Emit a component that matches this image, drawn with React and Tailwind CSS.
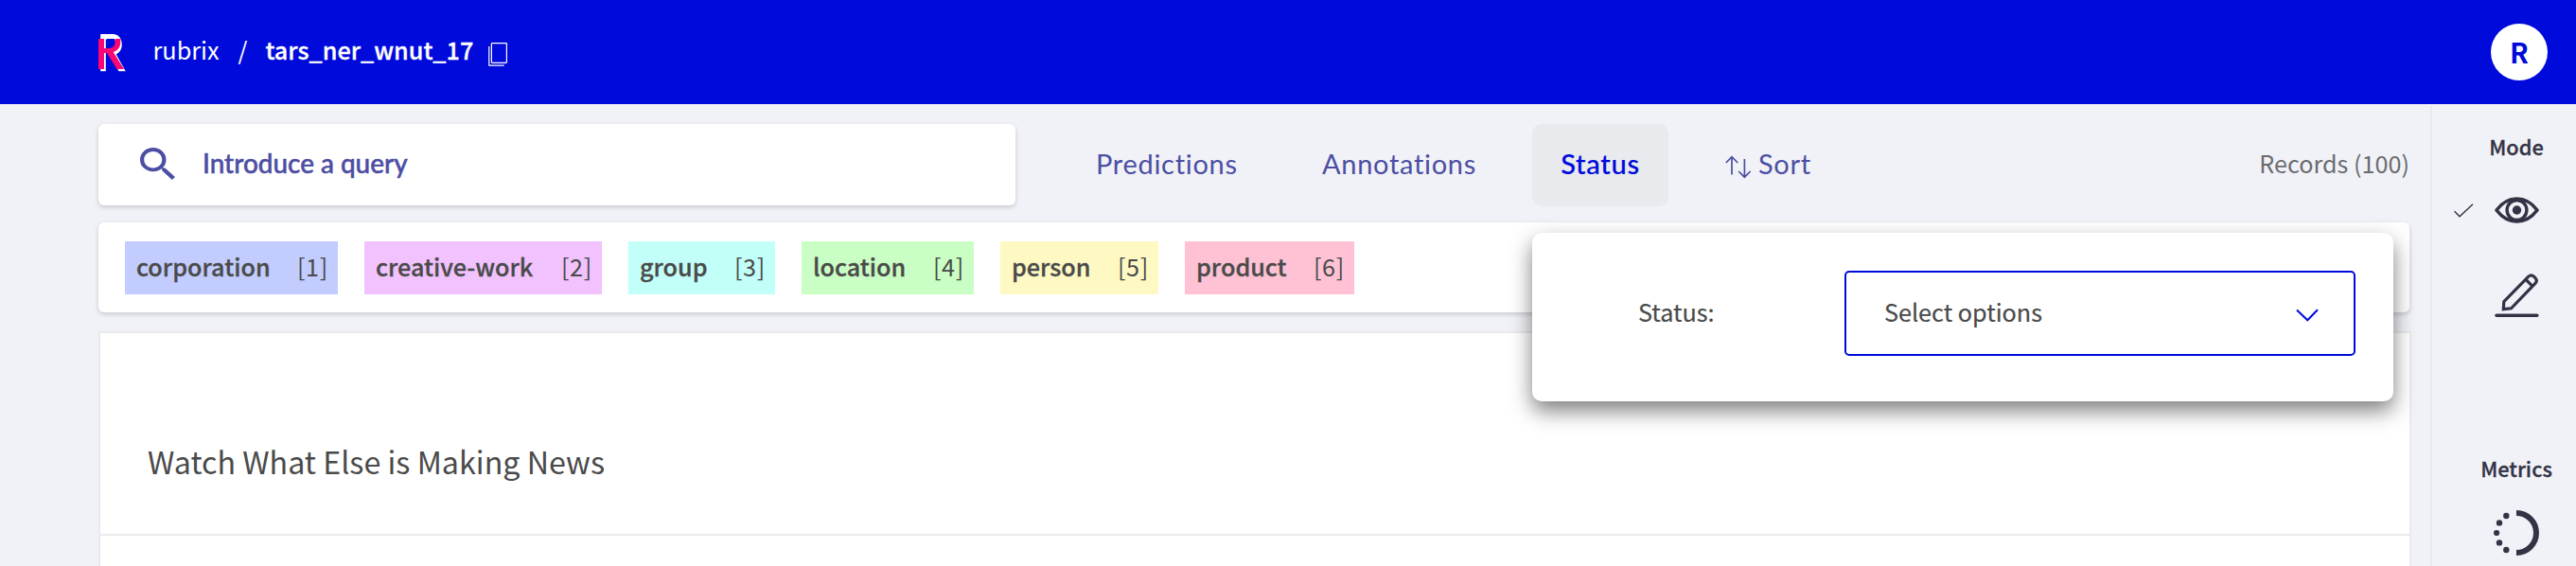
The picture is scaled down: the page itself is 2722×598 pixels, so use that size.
import React from "react";

const LABELS = [
  { name: "corporation", key: 1, box: "w-[225px] bg-[#c3ccfe]" },
  { name: "creative-work", key: 2, box: "w-[251px] bg-[#f2c2fe]" },
  { name: "group", key: 3, box: "w-[155px] bg-[#c2fff8]" },
  { name: "location", key: 4, box: "w-[182px] bg-[#c9fec4]" },
  { name: "person", key: 5, box: "w-[167px] bg-[#fef9c3]" },
  { name: "product", key: 6, box: "w-[179px] bg-[#fec2d4]" },
];

function Logo() {
  return (
    <svg className="mt-0.5 h-10 w-[29px] shrink-0" viewBox="0 0 29 40" fill="none">
      <path d="M5 39.3V2.7H14.5C20 2.7 22 6.5 22 11C22 16 19 19.5 13.5 19.5" stroke="#fff" strokeWidth="5.6" />
      <path d="M12.5 21H18.5L28.7 39.3H21.5Z" fill="#fff" />
      <path d="M9 5H17V9C17 12.5 15 14.5 11 14.8H9Z" fill="#000adb" />
      <path d="M0 5H6V15H10.5C15 15 17.5 12.5 17.5 9V5H23.3V8.5C23.3 14 20.5 17.5 15.7 19L27 37H19.5L9 20H6V37H0Z" fill="#fa0573" />
    </svg>
  );
}

function CopyIcon() {
  return (
    <svg className="h-[25px] w-5 shrink-0" viewBox="0 0 20 25" fill="none" stroke="#fff" strokeWidth="1.2">
      <rect x="3.4" y="0.7" width="16" height="20.6" rx="0.5" />
      <path d="M0.8 4V24.2H16.8" />
    </svg>
  );
}

function SortIcon() {
  return (
    <svg className="h-[25px] w-7 shrink-0" viewBox="0 0 28 25" fill="none" stroke="currentColor" strokeWidth="1.7">
      <path d="M7 20.5V1.6M0.8 8L7 1.6L13.2 8" />
      <path d="M20.4 4V23.2M14.2 17L20.4 23.2L26.6 17" />
    </svg>
  );
}

function Header() {
  return (
    <header className="flex h-[110px] items-center bg-[#000adb] pr-[30px] pl-[104px] text-[25.3px] text-white">
      <Logo />
      <div className="flex items-center pb-[6px] leading-10">
        <span className="ml-[28.5px] w-[90px]">rubrix</span>
        <span className="w-[29px]">/</span>
        <span className="w-[235px] text-[25.2px] font-medium [-webkit-text-stroke:0.3px_currentColor]">tars_ner_wnut_17</span>
      </div>
      <div className="pt-[5px]">
        <CopyIcon />
      </div>
      <div className="ml-auto flex size-[60px] items-center justify-center rounded-full bg-white pb-[3px] text-[29px] leading-10 font-bold text-[#000adb]">
        R
      </div>
    </header>
  );
}

function StatusMenu() {
  return (
    <div className="absolute top-[115px] left-0 z-10 flex h-[178px] w-[910px] rounded-[10px] bg-white pt-10 pl-28 font-['Noto_Sans_CJK_SC',sans-serif] text-[25.2px] font-normal tracking-normal text-[#4a4a4a] shadow-[0_10px_22px_0_rgba(0,0,0,0.5)]">
      <span className="w-[218px] pt-[23px] leading-10">Status:</span>
      <div className="flex h-[90px] w-[540px] items-center justify-between rounded-[5px] border-2 border-[#000adb] pr-[37px] pl-10">
        <span className="pb-[3px] leading-10">Select options</span>
        <svg className="mt-1 h-3.5 w-6" viewBox="0 0 24 14" fill="none" stroke="#000adb" strokeWidth="2">
          <path d="M1 1.5L12.3 12.3L23 1.2" />
        </svg>
      </div>
    </div>
  );
}

function Toolbar() {
  return (
    <div className="flex h-[86px] items-center text-[#4c4ea3]">
      <div className="flex h-[86px] w-[969px] items-center rounded-[6px] bg-white pb-0.5 pl-11 shadow-[0_2px_5px_0_rgba(0,0,0,0.17)]">
        <svg className="h-[34px] w-[37px]" viewBox="3 3 17.49 17.49" preserveAspectRatio="none" fill="currentColor">
          <path d="M15.5 14h-.79l-.28-.27A6.471 6.471 0 0 0 16 9.5 6.5 6.5 0 1 0 9.5 16c1.61 0 3.09-.59 4.23-1.57l.27.28v.79l5 4.99L20.49 19l-4.99-5zm-6 0C7.01 14 5 11.99 5 9.5S7.01 5 9.5 5 14 7.01 14 9.5 11.99 14 9.5 14z" />
        </svg>
        <span className="ml-[29px] font-['Lato',sans-serif] text-[27.9px] font-medium [-webkit-text-stroke:0.5px_currentColor]">Introduce a query</span>
      </div>
      <nav className="flex items-center font-['Lato',sans-serif] text-[29px] tracking-[0.7px] [font-variant-ligatures:none]">
        <span className="ml-[85px] w-[239px] pb-[3px]">Predictions</span>
        <span className="w-[222px] pb-[3px]">Annotations</span>
        <div className="relative flex h-[87px] w-36 items-center justify-center rounded-[10px] bg-[#e9eaed] pb-[3px] font-medium text-[#000adb] [-webkit-text-stroke:0.2px_currentColor]">
          Status
          <StatusMenu />
        </div>
        <span className="ml-[60px] flex items-center gap-[7px]">
          <span className="pt-1">
            <SortIcon />
          </span>
          <span className="pb-[3px]">Sort</span>
        </span>
      </nav>
      <span className="ml-auto pb-[5px] text-[25.2px] leading-10 text-[#6b6c70]">Records (100)</span>
    </div>
  );
}

function LabelBar() {
  return (
    <div className="mt-[18px] flex h-[95px] gap-7 rounded-[6px] bg-white pt-5 pl-7 text-[25.2px] text-[#4a4a4a] shadow-[0_2px_5px_0_rgba(0,0,0,0.17)]">
      {LABELS.map((l) => (
        <div key={l.key} className={"flex h-14 items-center justify-between pr-[10px] pb-[5px] pl-3 leading-10 " + l.box}>
          <span className="font-medium [-webkit-text-stroke:0.3px_currentColor]">{l.name}</span>
          <span className="tracking-[0.7px]">[{l.key}]</span>
        </div>
      ))}
    </div>
  );
}

function Records() {
  return (
    <div className="mt-5 w-[2444px] flex-1 border-2 border-b-0 border-[#e9eaed] bg-white">
      <div className="h-[214px] border-b-2 border-[#e9eaed] pt-[111px] pl-[50px] text-[32.24px] leading-[48px] text-[#4a4a4a]">
        Watch What Else is Making News
      </div>
    </div>
  );
}

function Sidebar() {
  return (
    <aside className="mt-0.5 w-[154px] border-l-2 border-[#e9eaed] text-[21.8px] leading-6 font-medium text-[#333346]">
      <p className="mt-[31px] pl-[26px] text-center [-webkit-text-stroke:0.3px_currentColor]">Mode</p>
      <div className="mt-[41px] flex items-center gap-[22px] pl-[23px]">
        <svg className="h-[15px] w-[21px]" viewBox="0 0 21 15" fill="none" stroke="currentColor" strokeWidth="1.4">
          <path d="M0.6 8.3L6 13.8L20 0.8" />
        </svg>
        <svg className="h-7 w-[47px]" viewBox="0 0 47 28" fill="none" stroke="currentColor">
          <path d="M2 14C8 6 15 2 23.5 2S39 6 45 14C39 22 32 26 23.5 26S8 22 2 14Z" strokeWidth="3.6" strokeLinejoin="round" />
          <circle cx="23.5" cy="14" r="10.4" strokeWidth="3.4" />
          <circle cx="23.5" cy="14" r="4.7" fill="currentColor" stroke="none" />
        </svg>
      </div>
      <div className="mt-[53px] flex justify-center pl-[26px]">
        <svg className="h-[46px] w-[47px]" viewBox="0 0 47 46" fill="none" stroke="currentColor" strokeWidth="3.2">
          <path d="M9.3 37.7L9.8 29.6L35.8 3.2Q38.6 0.6 41.3 3L43.2 5Q45.5 7.7 43 10.3L17.5 36.8Z" />
          <path d="M33 6.3L40 13.3" />
          <path d="M2 44.2H44.8" strokeWidth="3.5" strokeLinecap="round" />
        </svg>
      </div>
      <p className="mt-[148px] pl-[26px] text-center [-webkit-text-stroke:0.3px_currentColor]">Metrics</p>
      <div className="mt-8 flex justify-center pl-[26px]">
        <svg className="size-12" viewBox="0 0 48 48" fill="currentColor">
          <path d="M24 3A21 21 0 0 1 24 45" fill="none" stroke="currentColor" strokeWidth="6" />
          <circle cx="13.3" cy="6" r="3.2" />
          <circle cx="6" cy="13.4" r="3.2" />
          <circle cx="3.1" cy="24" r="3.1" />
          <circle cx="6" cy="34.4" r="3.2" />
          <circle cx="13.3" cy="42" r="3.2" />
        </svg>
      </div>
    </aside>
  );
}

export default function App() {
  return (
    <div className="flex h-[598px] w-[2722px] flex-col overflow-hidden bg-[#f1f2f7] font-['Noto_Sans_CJK_SC',sans-serif]">
      <Header />
      <div className="flex flex-1 justify-between pl-[104px]">
        <main className="flex w-[2442px] flex-col pt-[21px]">
          <Toolbar />
          <LabelBar />
          <Records />
        </main>
        <Sidebar />
      </div>
    </div>
  );
}
